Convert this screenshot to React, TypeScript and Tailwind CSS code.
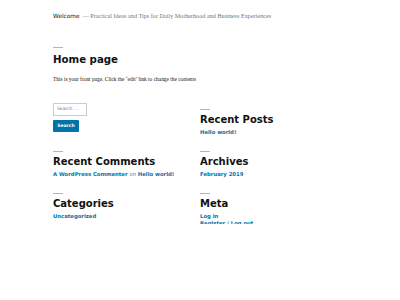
import React from "react";

const sans = "font-['DejaVu_Sans',sans-serif]";
const serif = "font-['Liberation_Serif',serif]";

function Widget({ title, children }: { title: string; children: React.ReactNode }) {
    return (
        <section className="flex flex-col">
            <div className="w-[10px] h-px bg-[#b5b5b5]" />
            <h2 className={`${sans} font-bold text-[10px] leading-[12px] text-[#111] mt-[4px]`}>{title}</h2>
            <div className={`${sans} font-bold text-[5.3px] leading-[7px] text-[#0073aa] mt-[3px]`}>{children}</div>
        </section>
    );
}

export default function App() {
    return (
        <div className="w-[400px] h-[300px] bg-white overflow-hidden">
            <div className="h-[224px] overflow-hidden px-[53px]">
                {/* Site header */}
                <header className="pt-[12px] flex items-baseline gap-[3px] text-[5.8px] leading-[8px]">
                    <span className={`${sans} text-[#111]`}>Welcome</span>
                    <span className={`${serif} text-[6.2px] text-[#767676]`}>— Practical Ideas and Tips for Daily Motherhood and Business Experiences</span>
                </header>

                {/* Front page */}
                <article className="mt-[27px]">
                    <div className="w-[10px] h-px bg-[#b5b5b5]" />
                    <h1 className={`${sans} font-bold text-[10.2px] leading-[13px] text-[#111] mt-[5px]`}>Home page</h1>
                    <p className={`${serif} text-[5.4px] leading-[7px] text-[#111] mt-[10px]`}>
                        This is your front page. Click the ‘edit’ link to change the contents
                    </p>
                </article>

                {/* Widgets */}
                <div className="grid grid-cols-[147px_1fr] gap-y-[15px] mt-[20px]">
                    <div className="flex flex-col items-start">
                        <div className={`${sans} w-[34px] h-[13px] border border-[#ccc] text-[4.5px] text-[#767676] flex items-center px-[3px]`}>Search …</div>
                        <button className={`${sans} mt-[4px] w-[26px] h-[12px] bg-[#0073aa] text-white text-[4.5px] font-bold rounded-[1px] flex items-center justify-center`}>Search</button>
                    </div>
                    <div className="pt-[6px]">
                        <Widget title="Recent Posts">Hello world!</Widget>
                    </div>
                    <Widget title="Recent Comments">
                        A WordPress Commenter <span className="font-normal text-[#767676]">on</span> Hello world!
                    </Widget>
                    <Widget title="Archives">February 2019</Widget>
                    <Widget title="Categories">Uncategorized</Widget>
                    <Widget title="Meta">
                        <div>Log in</div>
                        <div>Register / Log out</div>
                    </Widget>
                </div>
            </div>
        </div>
    );
}
